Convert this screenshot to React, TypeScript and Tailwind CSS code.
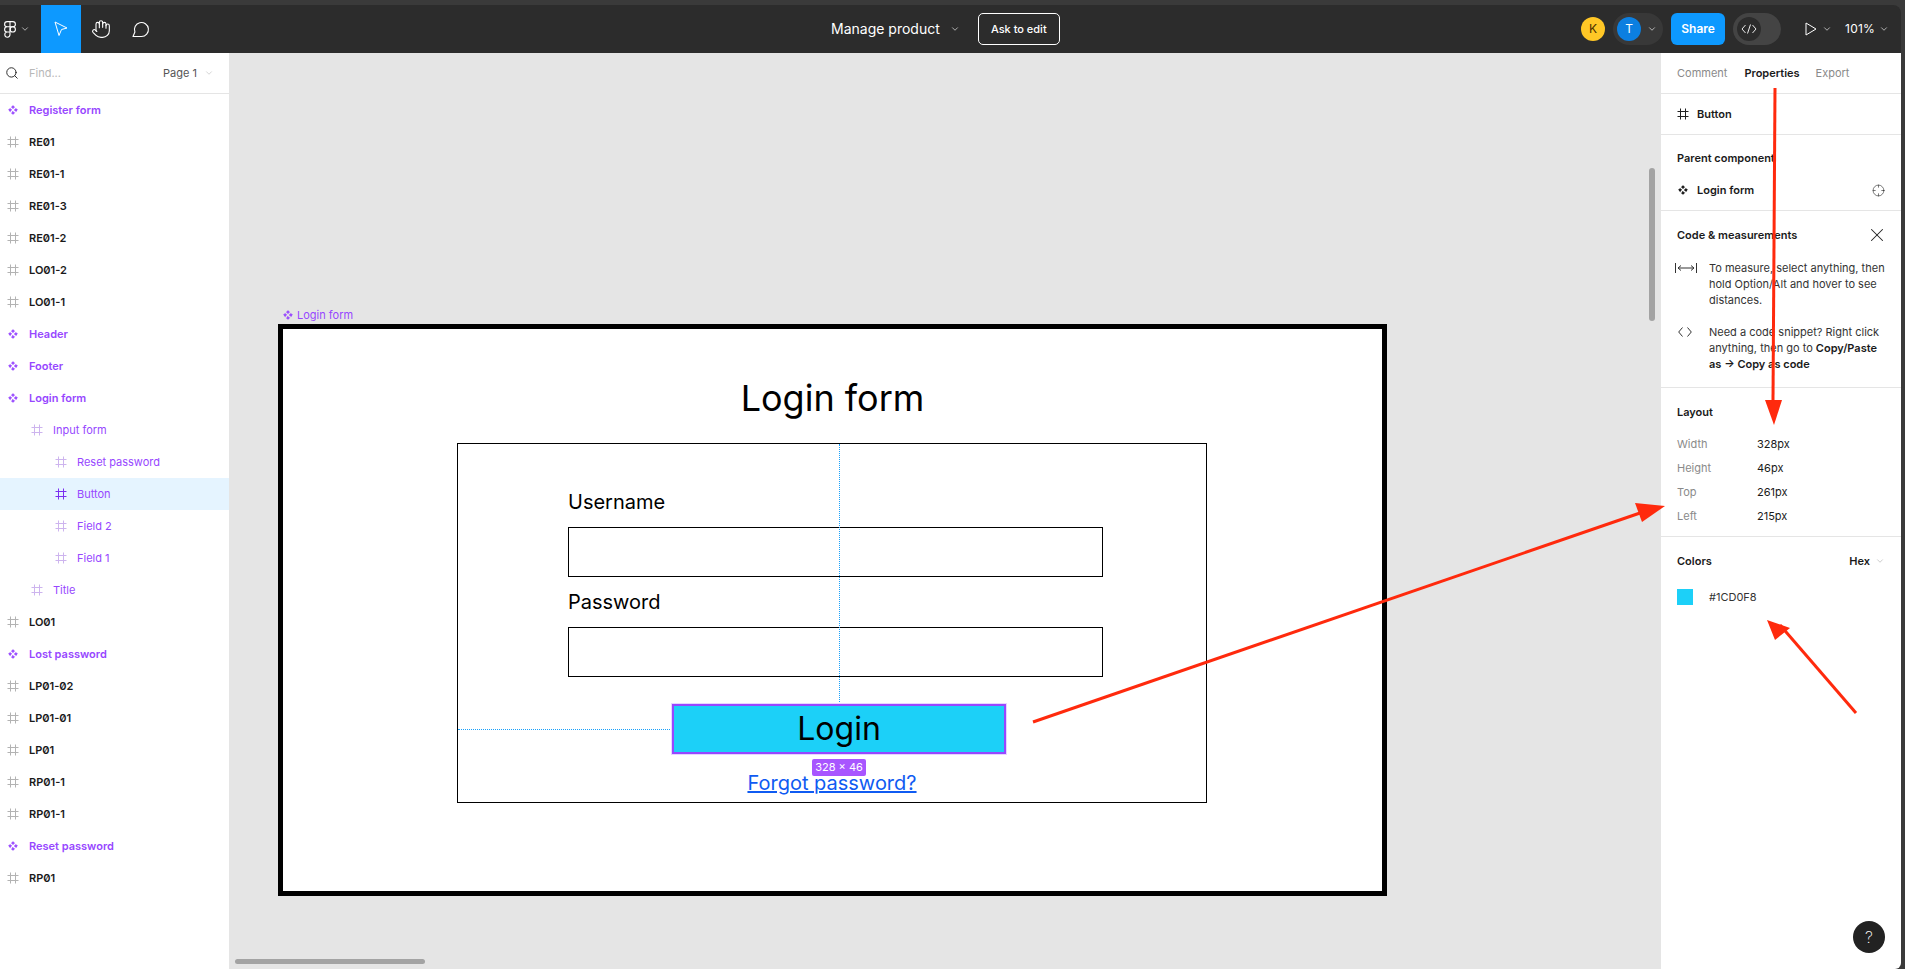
import { Hand, ChevronDown, Search, X, Crosshair } from "lucide-react";

type Row = { name: string; kind: "comp" | "frame"; indent?: number; sub?: boolean; active?: boolean };

const rows: Row[] = [
    { name: "Register form", kind: "comp" },
    { name: "RE01", kind: "frame" },
    { name: "RE01-1", kind: "frame" },
    { name: "RE01-3", kind: "frame" },
    { name: "RE01-2", kind: "frame" },
    { name: "LO01-2", kind: "frame" },
    { name: "LO01-1", kind: "frame" },
    { name: "Header", kind: "comp" },
    { name: "Footer", kind: "comp" },
    { name: "Login form", kind: "comp" },
    { name: "Input form", kind: "frame", indent: 1, sub: true },
    { name: "Reset password", kind: "frame", indent: 2, sub: true },
    { name: "Button", kind: "frame", indent: 2, sub: true, active: true },
    { name: "Field 2", kind: "frame", indent: 2, sub: true },
    { name: "Field 1", kind: "frame", indent: 2, sub: true },
    { name: "Title", kind: "frame", indent: 1, sub: true },
    { name: "LO01", kind: "frame" },
    { name: "Lost password", kind: "comp" },
    { name: "LP01-02", kind: "frame" },
    { name: "LP01-01", kind: "frame" },
    { name: "LP01", kind: "frame" },
    { name: "RP01-1", kind: "frame" },
    { name: "RP01-1", kind: "frame" },
    { name: "Reset password", kind: "comp" },
    { name: "RP01", kind: "frame" },
];

function FrameIcon({ className }: { className: string }) {
    return (
        <svg width="12" height="12" viewBox="0 0 12 12" fill="none" stroke="currentColor" strokeWidth="1" className={className}>
            <path d="M3.5 0.5V11.5M8.5 0.5V11.5M0.5 3.5H11.5M0.5 8.5H11.5" />
        </svg>
    );
}

function CompIcon({ className }: { className: string }) {
    return (
        <svg width="10" height="10" viewBox="0 0 10 10" fill="currentColor" stroke="currentColor" strokeWidth="1" strokeLinejoin="round" className={className}>
            <path d="M5 0.7L6.4 2.1L5 3.5L3.6 2.1ZM5 6.5L6.4 7.9L5 9.3L3.6 7.9ZM2.1 3.6L3.5 5L2.1 6.4L0.7 5ZM7.9 3.6L9.3 5L7.9 6.4L6.5 5Z" />
        </svg>
    );
}

function FigmaLogo() {
    return (
        <svg width="12" height="17" viewBox="0 0 12 17" fill="none" stroke="white" strokeWidth="1.1">
            <path d="M6 0.6H3.2a2.6 2.6 0 0 0 0 5.2H6ZM6 0.6H8.8a2.6 2.6 0 0 1 0 5.2H6ZM6 5.8H3.2a2.6 2.6 0 0 0 0 5.2H6ZM6 11H3.2a2.6 2.6 0 1 0 2.8 2.6Z" />
            <circle cx="8.8" cy="8.4" r="2.6" />
        </svg>
    );
}

function Toolbar() {
    return (
        <div className="h-12 shrink-0 flex items-center bg-[#2c2c2c] rounded-tr-[8px] text-white relative">
            <div className="w-[41px] flex items-center pl-1 gap-1">
                <FigmaLogo />
                <ChevronDown size={10} strokeWidth={1.5} />
            </div>
            <div className="w-10 h-12 bg-[#0d99ff] flex items-center justify-center">
                <svg width="14" height="16" viewBox="0 0 14 16" fill="none" stroke="white" strokeWidth="1">
                    <path d="M1 1L13 7L7.5 8.5L5 14.5Z" strokeLinejoin="round" />
                </svg>
            </div>
            <div className="w-10 h-12 flex items-center justify-center">
                <Hand size={20} strokeWidth={1.3} />
            </div>
            <div className="w-10 h-12 flex items-center justify-center">
                <svg width="18" height="18" viewBox="0 0 18 18" fill="none" stroke="white" strokeWidth="1.1">
                    <path d="M1 16.5H9.5a7 7 0 1 0-6.6-4.5Z" strokeLinejoin="round" />
                </svg>
            </div>
            <div className="absolute left-[831px] top-0 h-12 flex items-center">
                <span className="text-sm">Manage product</span>
                <ChevronDown size={10} strokeWidth={1.5} className="ml-[10px]" />
                <span className="ml-[18px] w-[82px] h-8 border border-white rounded-[5px] flex items-center justify-center text-[11px] font-medium">Ask to edit</span>
            </div>
            <div className="ml-auto flex items-center pr-3">
                <span className="w-6 h-6 rounded-full bg-[#ffc726] text-[#4a2f00] text-xs flex items-center justify-center">K</span>
                <div className="ml-2 w-[50px] h-8 rounded-full bg-[#383838] flex items-center pl-1">
                    <span className="w-6 h-6 rounded-full bg-[#0c7fe0] text-xs flex items-center justify-center">T</span>
                    <ChevronDown size={10} strokeWidth={1.5} className="ml-[6px]" />
                </div>
                <span className="ml-2 w-[54px] h-8 rounded-[6px] bg-[#0d99ff] text-xs font-semibold flex items-center justify-center">Share</span>
                <div className="ml-2 w-12 h-8 rounded-full bg-[#444444] flex items-center pl-1">
                    <span className="w-6 h-6 rounded-full bg-[#2c2c2c] flex items-center justify-center">
                        <svg width="16" height="10" viewBox="0 0 16 10" fill="none" stroke="white" strokeWidth="0.9">
                            <path d="M4.5 1L1 5L4.5 9M11.5 1L15 5L11.5 9M9.5 0.5L6.5 9.5" />
                        </svg>
                    </span>
                </div>
                <svg width="12" height="14" viewBox="0 0 12 14" fill="none" stroke="white" strokeWidth="1" className="ml-[24px]">
                    <path d="M1 1L11 7L1 13Z" strokeLinejoin="round" />
                </svg>
                <ChevronDown size={10} strokeWidth={1.5} className="ml-[5px]" />
                <span className="ml-[13px] text-xs tracking-[0.2px]">101%</span>
                <ChevronDown size={10} strokeWidth={1.5} className="ml-[4px]" />
            </div>
        </div>
    );
}

function LeftPanel() {
    return (
        <div className="w-[229px] shrink-0 bg-white flex flex-col">
            <div className="h-[41px] shrink-0 flex items-center border-b border-[#e5e5e5] pl-[5px] pr-[15px] text-[11px]">
                <Search size={14} strokeWidth={1.6} className="text-[#222]" />
                <span className="ml-[10px] text-[#b8b8b8]">Find...</span>
                <span className="ml-auto text-[#555]">Page 1</span>
                <ChevronDown size={10} strokeWidth={1.2} className="ml-[7px] text-[#aaa]" />
            </div>
            <div className="flex flex-col">
                {rows.map((r, i) => (
                    <div
                        key={i}
                        className={`h-8 shrink-0 flex items-center text-[11px] slashed-zero ${r.active ? "bg-[#e5f4ff]" : ""} ${
                            r.indent === 2 ? "pl-[55px]" : r.indent === 1 ? "pl-[31px]" : "pl-[7px]"
                        }`}
                    >
                        {r.kind === "comp" ? (
                            <CompIcon className="mx-[1px] text-[#9747ff]" />
                        ) : (
                            <FrameIcon className={r.sub ? (r.active ? "text-[#7b2ff0]" : "text-[#cdb4ee]") : "text-[#b3b3b3]"} />
                        )}
                        <span
                            className={`ml-[10px] ${
                                r.kind === "comp" ? "font-semibold text-[#9747ff]" : r.sub ? "text-[#9747ff]" : "font-semibold text-[#1a1a1a]"
                            }`}
                        >
                            {r.name}
                        </span>
                    </div>
                ))}
            </div>
        </div>
    );
}

function Canvas() {
    return (
        <div className="flex-1 bg-[#e5e5e5] relative overflow-hidden">
            <div className="absolute left-[54px] top-[254px] flex items-center gap-[4px] text-[11px] text-[#9747ff]">
                <CompIcon className="" />
                <span>Login form</span>
            </div>
            <div className="absolute left-[49px] top-[271px] w-[1109px] h-[572px] bg-white border-[5px] border-black flex flex-col items-center">
                <h1 className="mt-[47px] text-[36px] leading-[44px] text-black">Login form</h1>
                <div className="mt-[23px] self-start ml-[174px] w-[750px] h-[360px] border border-black relative flex flex-col pl-[110px]">
                    <p className="mt-[45px] text-[20px] leading-[26px] text-black">Username</p>
                    <div className="mt-[12px] w-[535px] h-[50px] border border-black" />
                    <p className="mt-[12px] text-[20px] leading-[26px] text-black">Password</p>
                    <div className="mt-[12px] w-[535px] h-[50px] border border-black" />
                    <div className="absolute left-[381px] top-0 h-[260px] border-l border-dotted border-[#18a0fb]" />
                    <div className="absolute left-0 top-[285px] w-[214px] border-t border-dotted border-[#18a0fb]" />
                    <div className="absolute left-[214px] top-[260px] w-[334px] h-[50px] bg-[#1cd0f8] border-2 border-[#9747ff] outline outline-1 outline-[#e6d5ff] flex items-center justify-center text-[32px] text-black">
                        Login
                    </div>
                    <a className="absolute left-0 right-0 top-[325px] text-center text-[20px] leading-[28px] text-[#0f5bf2] underline">Forgot password?</a>
                    <div className="absolute left-[354px] top-[315px] w-[54px] h-[17px] rounded-[2px] bg-[#a855ff] text-white text-[11px] flex items-center justify-center whitespace-nowrap">
                        328 × 46
                    </div>
                </div>
            </div>
            <div className="absolute left-[1420px] top-[115px] w-[6px] h-[153px] rounded-full bg-[#a3a3a3]" />
            <div className="absolute left-[6px] bottom-[5px] w-[190px] h-[5px] rounded-full bg-[#a3a3a3]" />
        </div>
    );
}

function Section({ children, last }: { children: React.ReactNode; last?: boolean }) {
    return <div className={`px-4 ${last ? "" : "border-b border-[#e5e5e5]"}`}>{children}</div>;
}

function RightPanel() {
    return (
        <div className="w-60 shrink-0 bg-white flex flex-col text-[11px] text-[#1a1a1a] relative rounded-br-[6px]">
            <div className="h-[41px] shrink-0 flex items-center px-4 border-b border-[#e5e5e5]">
                <span className="text-[#8a8a8a]">Comment</span>
                <span className="ml-[17px] font-semibold">Properties</span>
                <span className="ml-4 text-[#8a8a8a]">Export</span>
            </div>
            <Section>
                <div className="h-10 flex items-center gap-[8px] font-semibold">
                    <FrameIcon className="text-[#222]" />
                    <span>Button</span>
                </div>
            </Section>
            <Section>
                <div className="h-[75px] flex flex-col">
                    <p className="mt-[15px] leading-4 font-semibold">Parent component</p>
                    <div className="mt-4 flex items-center font-semibold">
                        <CompIcon className="mx-[1px] text-[#111]" />
                        <span className="ml-[8px]">Login form</span>
                        <Crosshair size={13} strokeWidth={1.2} className="ml-auto text-[#333]" />
                    </div>
                </div>
            </Section>
            <Section>
                <div className="h-[176px] flex flex-col">
                    <div className="mt-[16px] flex items-center justify-between font-semibold leading-4">
                        <span>Code &amp; measurements</span>
                        <X size={22} strokeWidth={1.1} className="text-[#222] -my-[3px] -mr-[3px]" />
                    </div>
                    <div className="mt-[17px] flex leading-4 text-[#333]">
                        <svg width="22" height="10" viewBox="0 0 22 10" fill="none" stroke="#333" strokeWidth="1" className="shrink-0 -ml-[2px] mt-[3px]">
                            <path d="M0.5 0V10M21.5 0V10M3 5H19M6 2.5L3 5L6 7.5M16 2.5L19 5L16 7.5" />
                        </svg>
                        <p className="ml-[12px]">
                            To measure, select anything, then hold Option/Alt and hover to see distances.
                        </p>
                    </div>
                    <div className="mt-[16px] flex leading-4 text-[#333]">
                        <svg width="14" height="10" viewBox="0 0 14 10" fill="none" stroke="#333" strokeWidth="1" className="shrink-0 ml-[1px] mt-[3px]">
                            <path d="M4.5 0.5L0.7 5L4.5 9.5M9.5 0.5L13.3 5L9.5 9.5" />
                        </svg>
                        <p className="ml-[17px]">
                            Need a code snippet? Right click anything, then go to <b className="font-semibold text-[#1a1a1a]">Copy/Paste as → Copy as code</b>
                        </p>
                    </div>
                </div>
            </Section>
            <Section>
                <div className="h-[148px] flex flex-col">
                    <p className="mt-[16px] leading-4 font-semibold">Layout</p>
                    <div className="mt-[12px] grid grid-cols-[80px_1fr] auto-rows-[24px] items-center">
                        <span className="text-[#8a8a8a]">Width</span>
                        <span>328px</span>
                        <span className="text-[#8a8a8a]">Height</span>
                        <span>46px</span>
                        <span className="text-[#8a8a8a]">Top</span>
                        <span>261px</span>
                        <span className="text-[#8a8a8a]">Left</span>
                        <span>215px</span>
                    </div>
                </div>
            </Section>
            <Section last>
                <div className="flex items-center justify-between mt-[16px] leading-4 font-semibold">
                    <span>Colors</span>
                    <span className="flex items-center gap-[5px]">
                        Hex
                        <ChevronDown size={10} strokeWidth={1.2} className="text-[#999]" />
                    </span>
                </div>
                <div className="mt-[20px] flex items-center">
                    <span className="w-4 h-4 bg-[#1cd0f8]" />
                    <span className="ml-4 text-[#333]">#1CD0F8</span>
                </div>
            </Section>
            <div className="absolute right-4 bottom-4 w-8 h-8 rounded-full bg-[#222222] text-white text-base font-extralight flex items-center justify-center">?</div>
        </div>
    );
}

export default function App() {
    return (
        <div className="w-[1905px] h-[969px] overflow-hidden bg-[#3a3a3a] flex flex-col relative font-['Inter',sans-serif]">
            <div className="h-[5px] shrink-0" />
            <div className="flex-1 flex flex-col min-h-0 pr-1">
                <Toolbar />
                <div className="flex-1 flex min-h-0">
                    <LeftPanel />
                    <Canvas />
                    <RightPanel />
                </div>
            </div>
            {/* red annotation arrows drawn on top of the screenshot */}
            <svg width="1905" height="969" className="absolute left-0 top-0 pointer-events-none">
                <g stroke="#ff2a0d" strokeWidth="3" fill="#ff2a0d">
                    <path d="M1775 88L1773 400" />
                    <path d="M1765 400L1782 400L1774 425Z" strokeWidth="0" />
                    <path d="M1033 722L1640 513" />
                    <path d="M1635 503L1665 506L1642 522Z" strokeWidth="0" />
                    <path d="M1856 713L1780 625" />
                    <path d="M1767 620L1790 628L1775 640Z" strokeWidth="0" />
                </g>
            </svg>
        </div>
    );
}
